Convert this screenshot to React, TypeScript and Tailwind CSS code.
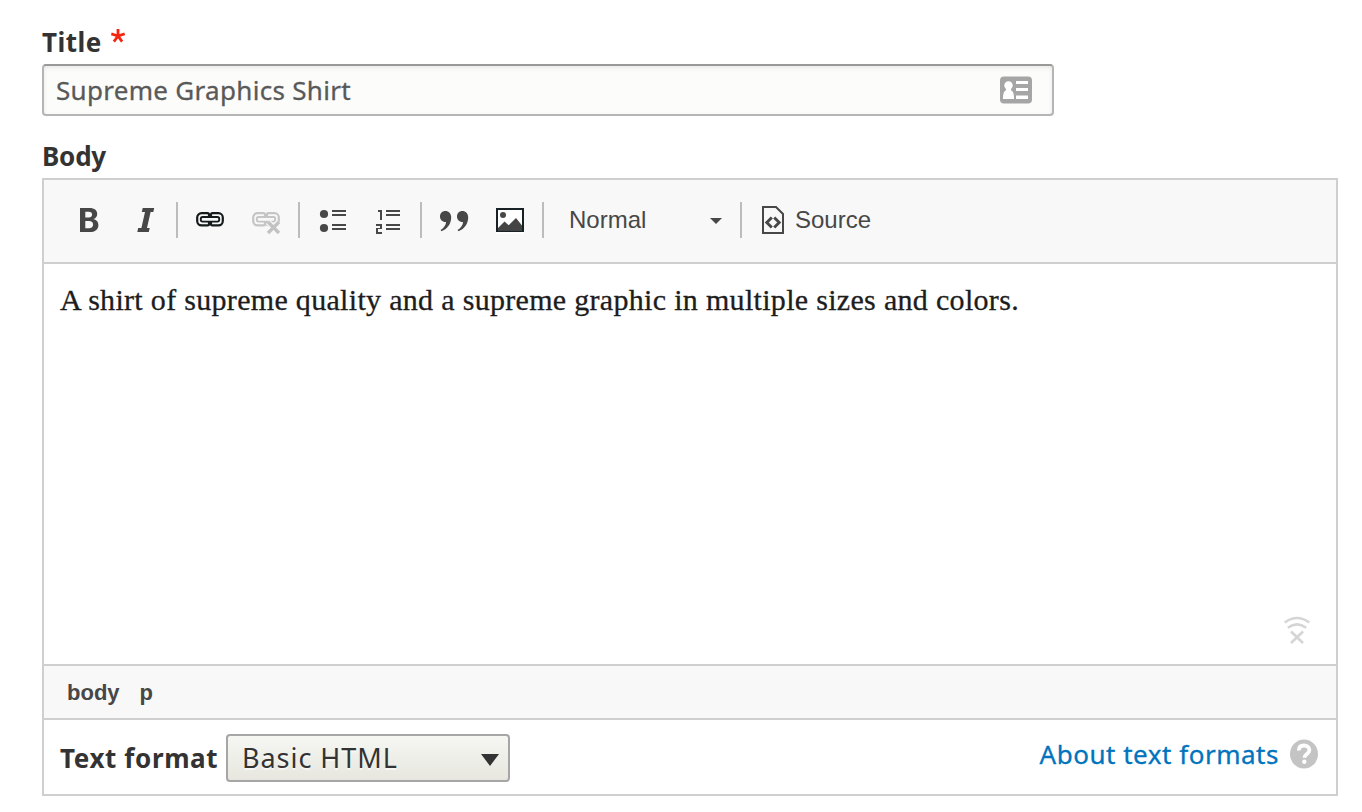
import type { ReactNode } from "react";

function ToolButton({ label, children }: { label: string; children: ReactNode }) {
  return (
    <button type="button" aria-label={label} className="block h-9 w-14">
      <svg viewBox="0 0 56 36" className="block h-9 w-14">
        {children}
      </svg>
    </button>
  );
}

function Separator() {
  return <div className="mx-1 h-9 w-0.5 bg-[#bcbcbc]" />;
}

function ChainLinks({ color }: { color: string }) {
  return (
    <g fill="none" stroke={color} strokeLinejoin="round">
      <path
        d="M27 14.500V12.600a1.400 1.400 0 0 0-1.400-1.400H19.500a4.300 4.300 0 0 0-4.300 4.300v3.600a4.300 4.300 0 0 0 4.300 4.300h6.100a1.400 1.400 0 0 0 1.400-1.400V20M29 14.500V12.600a1.400 1.400 0 0 1 1.400-1.400H36.500a4.300 4.300 0 0 1 4.300 4.300v3.600a4.300 4.300 0 0 1-4.300 4.300h-6.100a1.400 1.400 0 0 1-1.400-1.400V20"
        strokeWidth="2.200"
      />
      <rect x="18.800" y="15" width="18.400" height="4.600" rx="1.800" strokeWidth="1.900" />
    </g>
  );
}

function Toolbar() {
  return (
    <div className="flex h-[84px] items-start border-b-2 border-[#cfcfcf] bg-[#f8f8f8] pt-[22px] pl-4">
      <ToolButton label="Bold">
        <path
          fill="#474747"
          fillRule="evenodd"
          d="M20 6h9.500c5 0 7.700 2.200 7.700 5.900 0 2.700-1.500 4.500-4 5.200 3.200.600 5.200 2.600 5.200 5.800C38.400 27.500 35 30 29.800 30H20zM25.300 9.800v5.600h3.400c2.200 0 3.400-1 3.400-2.900 0-1.800-1.200-2.700-3.400-2.700zM25.300 19v7.200h3.700c2.600 0 4.100-1.300 4.100-3.700 0-2.300-1.500-3.500-4.100-3.500z"
        />
      </ToolButton>
      <ToolButton label="Italic">
        <path fill="#474747" d="M26.700 6h11.500l-.9 4h-2.700L31 26h2.700l-.9 4H21.300l.9-4h3.200L29 10h-3.200z" />
      </ToolButton>
      <Separator />
      <ToolButton label="Link">
        <ChainLinks color="#151a1b" />
      </ToolButton>
      <ToolButton label="Unlink">
        <ChainLinks color="#c5c5c5" />
        <path d="M30 20 41 31M41 20 30 31" stroke="#f8f8f8" strokeWidth="6" />
        <path d="M30 20 41 31M41 20 30 31" stroke="#c2c2c2" strokeWidth="3.300" />
      </ToolButton>
      <Separator />
      <ToolButton label="Bulleted list">
        <g fill="#474747">
          <circle cx="20" cy="12" r="4.100" />
          <circle cx="20" cy="26" r="4.100" />
          <path d="M28 8h14v2H28zM28 12h14v2H28zM28 22h14v2H28zM28 26h14v2H28z" />
        </g>
      </ToolButton>
      <ToolButton label="Numbered list">
        <path
          fill="#474747"
          d="M26 8h14v2H26zM26 12h14v2H26zM26 22h14v2H26zM26 26h14v2H26zM18 8h4v10h-2v-8h-2zM16 22h6v5h-4v3h4v2h-6v-6h4v-2h-4z"
        />
      </ToolButton>
      <Separator />
      <ToolButton label="Block quote">
        <g fill="#474747">
          <path d="M14 14.500C14 11.200 16.300 9 19.300 9c3.500 0 5.900 2.600 5.900 6.500 0 6.500-4.300 11.700-9.700 13.700l-.9-1.200c3.100-1.800 5.200-4.600 5.500-8-3.600.300-6.100-2.200-6.100-5.500z" />
          <path d="M31 14.500C31 11.200 33.300 9 36.300 9c3.500 0 5.900 2.600 5.900 6.500 0 6.500-4.300 11.700-9.700 13.700l-.9-1.200c3.100-1.800 5.200-4.600 5.500-8-3.600.300-6.100-2.200-6.100-5.500z" />
        </g>
      </ToolButton>
      <ToolButton label="Image">
        <path fill="#fff" d="M14 6h28v26H14z" />
        <path fill="none" stroke="#182126" strokeWidth="2" d="M15 7h26v22H15z" />
        <circle cx="21" cy="13" r="3" fill="#474747" />
        <path fill="#444" d="M16 29v-3l6.500-6.500 4.200 3.800L34 16l6 7.500V29z" />
      </ToolButton>
      <Separator />
      <button
        type="button"
        className="ml-[21px] flex h-9 w-[153px] items-center justify-between font-['Liberation_Sans',sans-serif] text-[24px] leading-9 text-[#474747]"
      >
        <span>Normal</span>
        <svg viewBox="0 0 12 6" className="mt-0.5 h-1.5 w-3">
          <path d="M0 0h12L6 6z" fill="#474747" />
        </svg>
      </button>
      <div className="ml-[18px] h-9 w-0.5 bg-[#bcbcbc]" />
      <button
        type="button"
        className="ml-5 flex h-9 items-center gap-[11px] font-['Liberation_Sans',sans-serif] text-[24px] leading-9 text-[#474747]"
      >
        <svg viewBox="0 0 22 28" className="h-7 w-[22px]" fill="none" stroke="#474747">
          <path d="M1 1h13l7 7v19H1z" strokeWidth="2" />
          <path d="m9.800 11.500-5 5 5 5M12.200 11.500l5 5-5 5" strokeWidth="2.900" />
        </svg>
        <span>Source</span>
      </button>
    </div>
  );
}

export default function App() {
  return (
    <main className="h-[812px] w-[1362px] bg-white pt-6 pl-[42px] font-['Noto_Sans','Open_Sans',sans-serif] text-[#333]">
      <label className="flex h-10 gap-[9px] text-[26px] leading-9 font-bold">
        <span className="tracking-[0.5px]">Title</span>
        <svg viewBox="0 0 14 14" className="mt-[5px] size-3.5" stroke="#f5260f" strokeWidth="2.800">
          <path d="M7 7V0M7 7 .3 4.800M7 7l6.700-2.200M7 7l-4.100 5.600M7 7l4.100 5.600" />
        </svg>
      </label>
      <div className="flex h-[52px] w-[1012px] items-center justify-between rounded-[4px] border-2 border-[#b5b5b5] border-t-[#999] bg-[#fcfcfa] pr-5 pl-3 shadow-[inset_0_2px_4px_rgba(0,0,0,0.08)]">
        <span className="text-[26px] leading-9 tracking-[0.3px] text-[#595959] [-webkit-text-stroke:0.3px_#595959]">
          Supreme Graphics Shirt
        </span>
        <svg viewBox="0 0 32 28" className="h-7 w-8">
          <rect y=".5" width="32" height="27" rx="4" fill="#a5a5a5" />
          <circle cx="8.500" cy="9.500" r="4.200" fill="#fff" />
          <path
            fill="#fff"
            d="M6 11h5v3.200c2 1 3 3 3 8.800H3c0-5.800 1-7.800 3-8.800zM16 5h12v3H16zM16 12h12v3H16zM16 19.500h12v3.500H16z"
          />
        </svg>
      </div>
      <div className="mt-6 h-[38px] text-[26px] leading-8 font-bold">
        <span className="-tracking-[0.2px]">Body</span>
      </div>
      <section className="w-[1296px] border-2 border-[#cfcfcf]">
        <Toolbar />
        <div className="flex h-[400px] flex-col justify-between pt-[18px] pl-4">
          <p className="font-['Liberation_Serif',serif] text-[30px] leading-9 tracking-[0.31px] whitespace-nowrap text-[#1d1d1d] [-webkit-text-stroke:0.3px_#1d1d1d]">
            A shirt of supreme quality and a supreme graphic in multiple sizes and colors.
          </p>
          <svg viewBox="0 0 26 28" className="mr-[26px] mb-5 h-7 w-[26px] self-end" fill="none" stroke="#d5d5d5">
            <path d="M.7 6.500Q13-2.500 25.300 6.500M3.800 11.800Q13 5 22.200 11.800" strokeWidth="2.600" />
            <path d="m7 15.500 12 11.500M19 15.500 7 27" strokeWidth="2.600" />
          </svg>
        </div>
        <div className="flex h-14 items-center gap-5 border-y-2 border-[#cfcfcf] bg-[#f8f8f8] pt-0.5 pl-[23px] font-['Liberation_Sans',sans-serif] text-[22px] leading-8 font-bold text-[#474747]">
          <span>body</span>
          <span>p</span>
        </div>
        <div className="flex h-[74px] items-start justify-between pt-3.5 pr-[18px] pl-4">
          <div className="flex items-center">
            <span className="w-[166px] text-[26px] leading-9 font-bold tracking-[0.62px] whitespace-nowrap">
              Text format
            </span>
            <button
              type="button"
              className="flex h-12 w-[284px] items-center justify-between rounded-[4px] border-2 border-[#a6a6a6] bg-linear-to-b from-[#f6f6f3] to-[#e7e7df] pr-[9px] pl-3.5"
            >
              <span className="text-[27px] leading-9 tracking-[0.95px] [text-shadow:0_2px_rgba(255,255,255,0.6)]">
                Basic HTML
              </span>
              <svg viewBox="0 0 18 12" className="mt-1 h-3 w-[18px]">
                <path d="M0 0h18L9 12z" fill="#333" />
              </svg>
            </button>
          </div>
          <a className="mt-1 flex items-center gap-[11px] text-[#0074bd]">
            <span className="text-[26px] leading-8 tracking-[0.52px] [-webkit-text-stroke:0.3px_#0074bd]">
              About text formats
            </span>
            <svg viewBox="0 0 28 30" className="h-[30px] w-7">
              <ellipse cx="14" cy="15" rx="14" ry="14.500" fill="#c4c4c4" />
              <path
                d="M8.800 11.500c0-3.400 2.200-5 5.200-5s5.400 1.600 5.400 4.500c0 4-5 4-5 7.800"
                fill="none"
                stroke="#fff"
                strokeWidth="3.800"
              />
              <circle cx="14.300" cy="22.800" r="2.200" fill="#fff" />
            </svg>
          </a>
        </div>
      </section>
    </main>
  );
}
